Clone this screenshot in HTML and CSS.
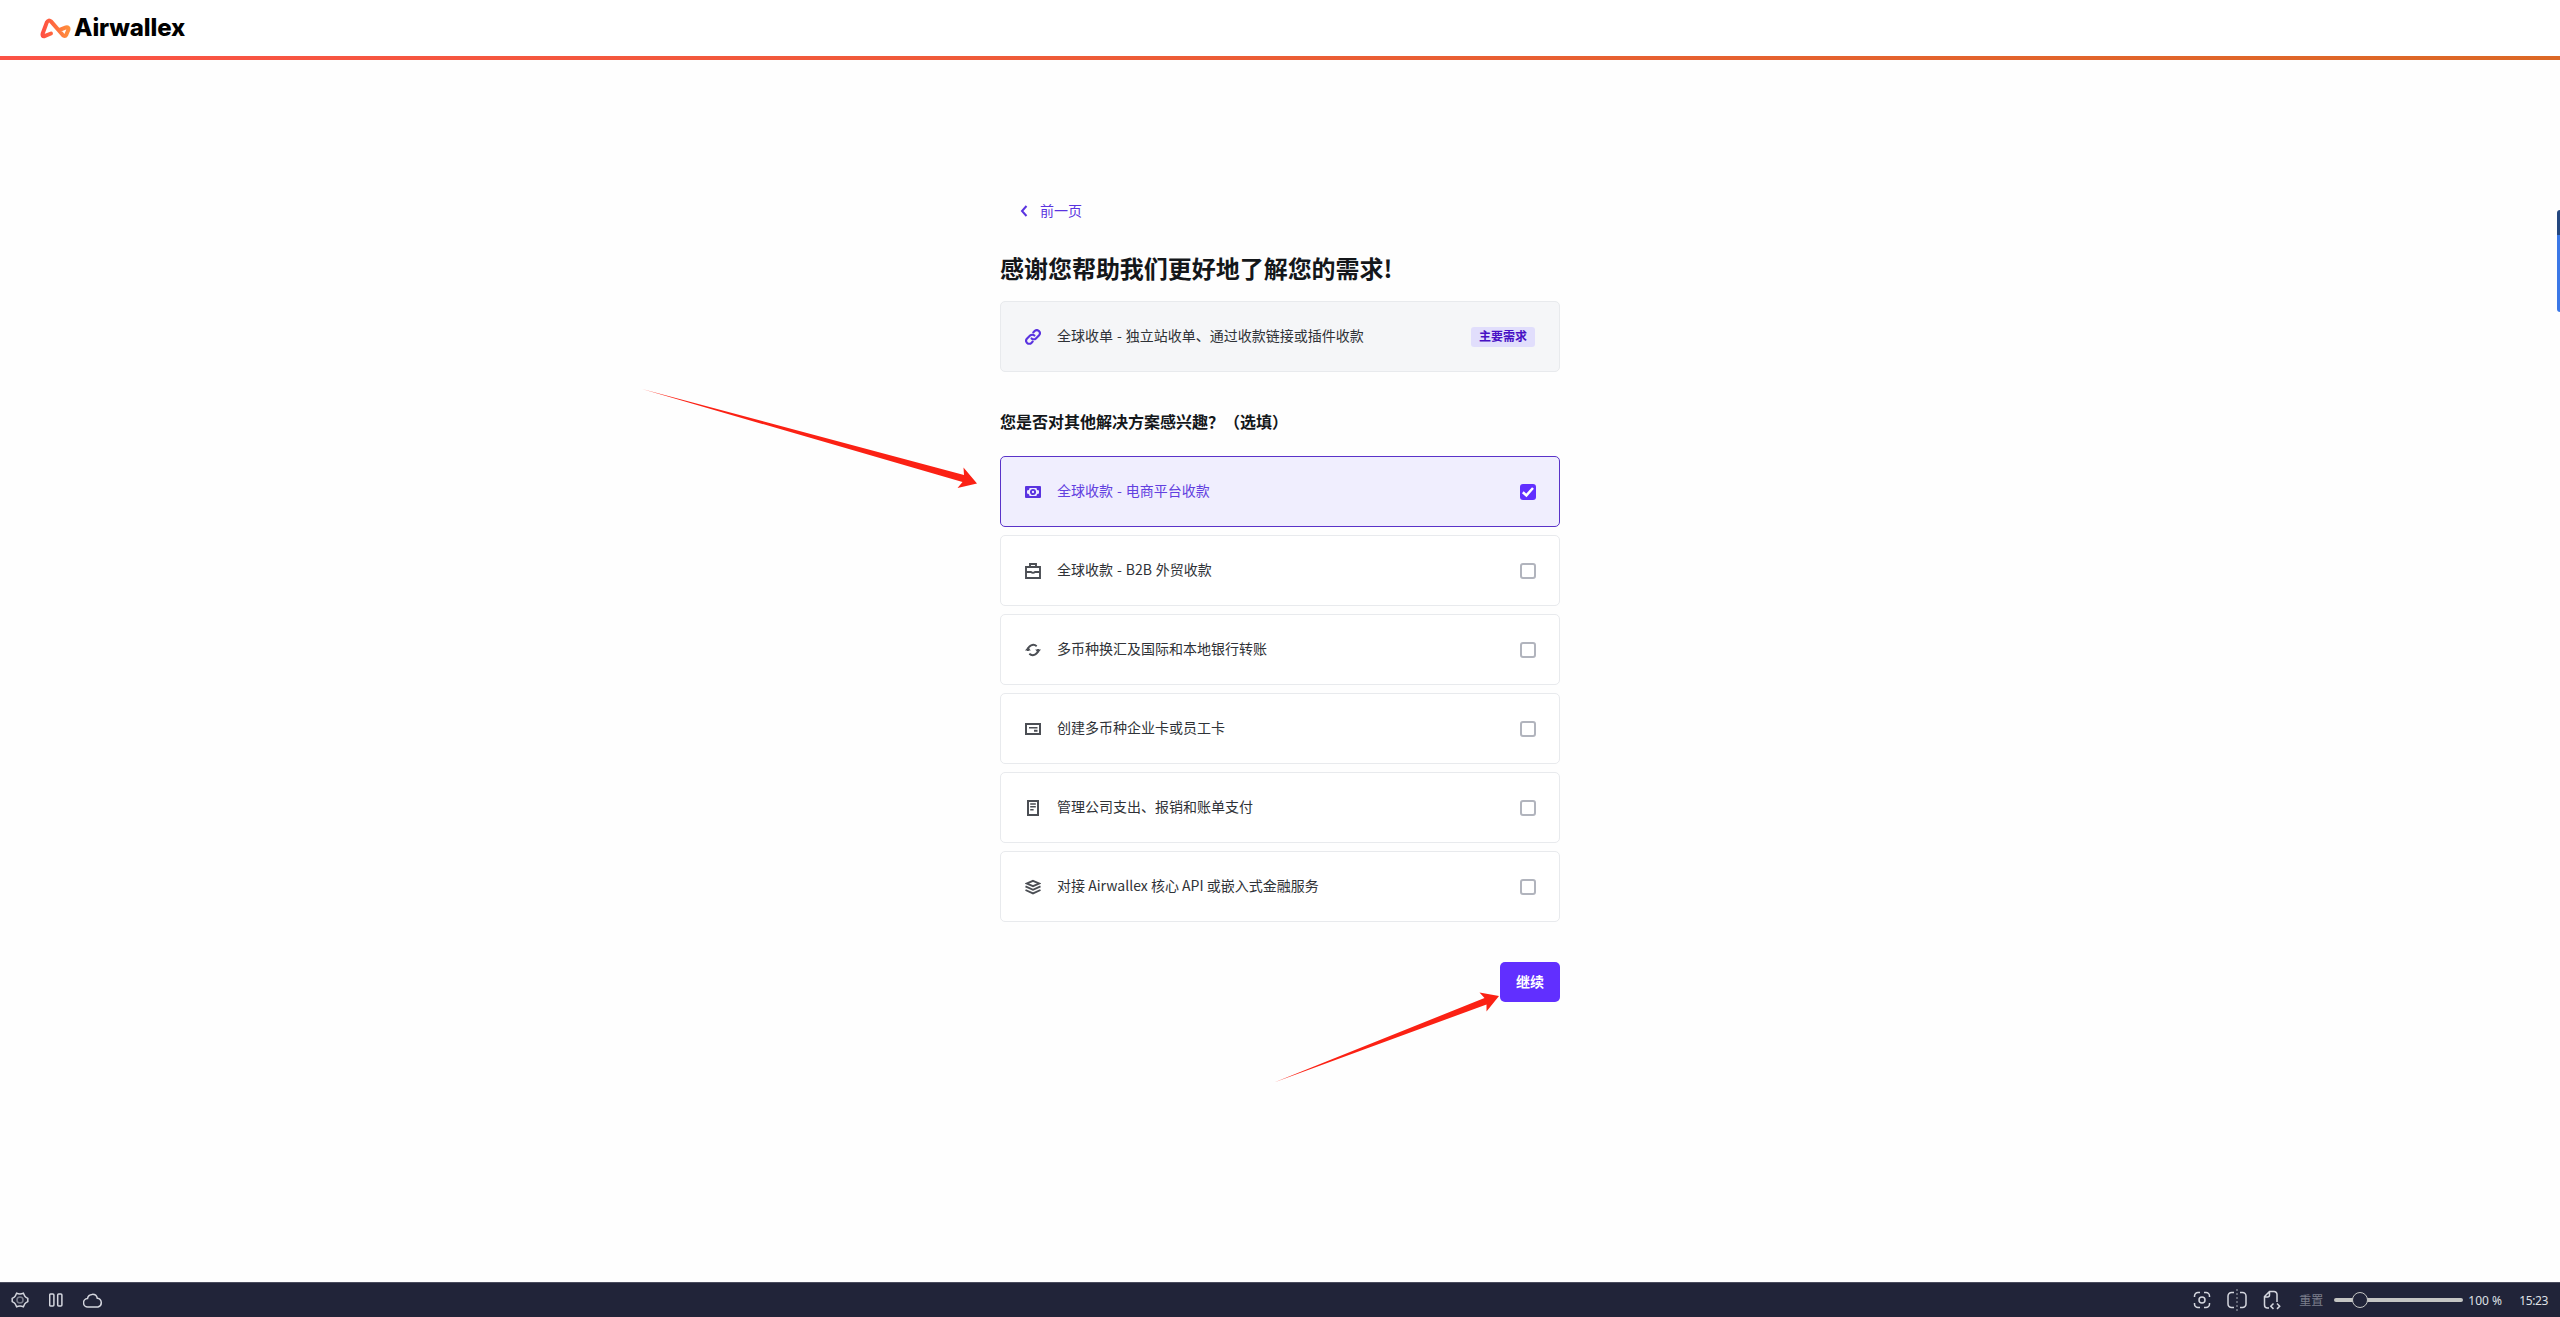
FILE: index.html
```html
<!DOCTYPE html>
<html lang="zh-CN">
<head>
  <meta charset="UTF-8">
  <meta name="viewport" content="width=device-width, initial-scale=1.0">
  <title>Airwallex</title>
  <link rel="stylesheet" href="styles.css">
</head>
<body>

  <header class="header">
    <svg class="logo-mark" width="31" height="21" viewBox="0 0 31 21">
      <defs>
        <linearGradient id="brand" x1="0" y1="0" x2="1" y2="0">
          <stop offset="0" stop-color="#ff4f42"/>
          <stop offset="1" stop-color="#ff8e3c"/>
        </linearGradient>
      </defs>
      <path d="M11 15.5L4.5 18.2Q1.8 18.700 2.600 15.800L6.800 4.400Q8.400 1.200 11.200 3.600L22.600 16.800Q24.800 19.200 26.400 16.600L28.500 11.600Q29 8.900 26 9.400L19 12.200" fill="none" stroke="url(#brand)" stroke-width="4" stroke-linecap="round" stroke-linejoin="round"/>
    </svg>
    <span class="logo-text">Airwallex</span>
  </header>
  <div class="brand-line"></div>

  <main class="content">
    <a class="back">
      <svg width="8" height="12" viewBox="0 0 8 12"><path d="M6.500 1L2 6l4.500 5" fill="none" stroke="currentColor" stroke-width="2"/></svg>
      <span>前一页</span>
    </a>

    <h1>感谢您帮助我们更好地了解您的需求!</h1>

    <div class="card primary">
      <svg class="icon" viewBox="0 0 16 16"><g fill="none" stroke="currentColor" stroke-width="2.1" stroke-linecap="round"><path d="M6.600 9.400a3 3 0 0 0 4.300 0l3-3a3 3 0 0 0-4.300-4.300L8.300 3.400"/><path d="M9.400 6.600a3 3 0 0 0-4.300 0l-3 3a3 3 0 0 0 4.300 4.300l1.300-1.300"/></g></svg>
      <span class="label dash">全球收单 - 独立站收单、通过收款链接或插件收款</span>
      <span class="badge">主要需求</span>
    </div>

    <h2>您是否对其他解决方案感兴趣？（选填）</h2>

    <div class="options">
      <div class="card selected">
        <svg class="icon" viewBox="0 0 16 16"><path fill="currentColor" fill-rule="evenodd" d="M1 2h14a1 1 0 0 1 1 1v10a1 1 0 0 1-1 1H1a1 1 0 0 1-1-1V3a1 1 0 0 1 1-1zm3.500 2A2.500 2.500 0 0 1 2 6.500v3A2.500 2.500 0 0 1 4.500 12h7A2.500 2.500 0 0 1 14 9.500v-3A2.500 2.500 0 0 1 11.500 4z"/><circle cx="8" cy="8" r="2.1" fill="none" stroke="currentColor" stroke-width="1.9"/></svg>
        <span class="label dash">全球收款 - 电商平台收款</span>
        <span class="checkbox checked"><svg width="16" height="16" viewBox="0 0 16 16"><path d="M2.800 8.200l3.600 3.200L13 4" fill="none" stroke="#fff" stroke-width="2.500"/></svg></span>
      </div>
      <div class="card">
        <svg class="icon" viewBox="0 0 16 16"><g fill="none" stroke="currentColor" stroke-width="1.9"><path d="M1 4h14v11H1zM5 4V1h6v3"/><path d="M1 9h5q2 1.600 4 0h5"/></g></svg>
        <span class="label dash">全球收款 - B2B 外贸收款</span>
        <span class="checkbox"></span>
      </div>
      <div class="card">
        <svg class="icon" viewBox="0 0 16 16"><g fill="none" stroke="currentColor" stroke-width="1.900"><path d="M2.900 9V8A5.300 5.300 0 0 1 11.700 4.200"/><path d="M13.100 7v1A5.300 5.300 0 0 1 4.300 11.800"/></g><path d="M0 8.600L2.900 5l2.900 3.600zM16 7.400L13.100 11l-2.900-3.600z" fill="currentColor"/></svg>
        <span class="label">多币种换汇及国际和本地银行转账</span>
        <span class="checkbox"></span>
      </div>
      <div class="card">
        <svg class="icon" viewBox="0 0 16 16"><path d="M1 3h14v10H1z" fill="none" stroke="currentColor" stroke-width="2"/><path d="M4 6h8.500v1.600H4zM9 8.800h3.500v1.900H9z" fill="currentColor"/></svg>
        <span class="label">创建多币种企业卡或员工卡</span>
        <span class="checkbox"></span>
      </div>
      <div class="card">
        <svg class="icon" viewBox="0 0 16 16"><path d="M3 1h10v14H3z" fill="none" stroke="currentColor" stroke-width="2"/><path d="M5.200 3.200h5.600v1.500H5.200zM5.200 6.100h5.600v1.500H5.200zM5.200 9h3.400v1.500H5.200z" fill="currentColor"/></svg>
        <span class="label">管理公司支出、报销和账单支付</span>
        <span class="checkbox"></span>
      </div>
      <div class="card">
        <svg class="icon" viewBox="0 0 16 16"><g fill="none" stroke="currentColor" stroke-width="1.900"><path d="M8 1.800l6 2.700-6 2.700-6-2.700z"/><path d="M.500 7.400L8 10.800l7.500-3.400M.500 11L8 14.400l7.500-3.400"/></g></svg>
        <span class="label">对接 Airwallex 核心 API 或嵌入式金融服务</span>
        <span class="checkbox"></span>
      </div>
    </div>

    <button class="button">继续</button>
  </main>

  <!-- Browser status bar -->
  <footer class="statusbar">
    <div class="status-left">
      <svg width="18" height="16" viewBox="0 0 18 16"><path d="M5.600 1.200Q9 2.600 12.400 1.200L13.800 4.200Q14.400 5.200 16.800 6.400V9.600Q14.400 10.800 13.800 11.800L12.400 14.800Q9 13.400 5.600 14.800L4.200 11.800Q3.600 10.800 1.200 9.600V6.400Q3.600 5.200 4.200 4.200z"/><circle class="dim" cx="9" cy="8" r="3"/></svg>
      <svg width="14" height="14" viewBox="0 0 14 14"><rect x=".700" y="1" width="4.200" height="12" rx="1"/><rect x="8.700" y="1" width="4.200" height="12" rx="1"/></svg>
      <svg width="20" height="15" viewBox="0 0 20 15"><path d="M5 14a4.200 4.200 0 0 1-.500-8.400A5 5 0 0 1 14.300 5.200a4.500 4.500 0 0 1 .700 8.800z"/></svg>
    </div>
    <div class="status-right">
      <svg width="18" height="18" viewBox="0 0 18 18"><path d="M1.500 6V5a3.500 3.500 0 0 1 3.500-3.500h2M11 1.500h2A3.500 3.500 0 0 1 16.500 5v1M16.500 12v1a3.500 3.500 0 0 1-3.500 3.500h-2M7 16.500H5A3.500 3.500 0 0 1 1.500 13v-1"/><circle cx="9" cy="9" r="3"/></svg>
      <svg width="20" height="22" viewBox="0 0 20 22"><path d="M7 3.500H4.500a3.500 3.500 0 0 0-3.500 3.500v8a3.500 3.500 0 0 0 3.500 3.500H7M13 3.500h2.500A3.500 3.500 0 0 1 19 7v8a3.500 3.500 0 0 1-3.500 3.500H13"/><path class="dim" d="M10 0v22" stroke-dasharray="2 2"/></svg>
      <svg width="18" height="20" viewBox="0 0 18 20"><path d="M6 18H4.500a3 3 0 0 1-3-3V6.500L6.500 1.500H11a3 3 0 0 1 3 3V12M1.500 7H4.500a2 2 0 0 0 2-2V2M10.500 13.500L7.800 16.200l2.700 2.700M14 13.500l2.700 2.700-2.700 2.700"/></svg>
      <span class="reset">重置</span>
      <div class="slider"><div class="knob"></div></div>
      <span class="zoom">100 %</span>
      <span class="clock">15:23</span>
    </div>
  </footer>

  <div class="side-tab"></div>

  <!-- Red pointer arrows -->
  <svg class="arrow arrow-option" width="340" height="106" viewBox="0 0 340 106"><path d="M0 0L322 86l-.500-7.500L335 94.500l-19.500 4.500 5-6z"/></svg>
  <svg class="arrow arrow-button" width="230" height="92" viewBox="0 0 230 92"><path d="M0 90.500L210.500 6 205.500.500 225 4l-12.500 15.500V12.500z"/></svg>

</body>
</html>
```

FILE: styles.css
```css
* { box-sizing: border-box; }
body { margin: 0; height: 1317px; overflow: hidden; display: flex; flex-direction: column; background: #fefefe; color: #14171a; font-family: "Noto Sans CJK SC", sans-serif; font-size: 14px; }
.header { height: 56px; padding: 0 40px; display: flex; align-items: center; background: #fff; }
.logo-mark { flex: none; }
.logo-text { margin-left: 3px; font-family: Inter, "Noto Sans", sans-serif; font-size: 24px; font-weight: 800; letter-spacing: -0.1px; line-height: 1; color: #000; }
.brand-line { height: 4px; background: linear-gradient(90deg, #fb5245, #dc6825); }

.content { width: 560px; margin: 0 auto; flex: 1; display: flex; flex-direction: column; }
.back { display: flex; align-items: center; gap: 12px; height: 40px; margin-top: 131px; padding-left: 20px; color: #5a33e0; }
.back span { margin-top: -2px; }
h1 { margin: 19px 0 0; height: 37px; font-size: 24px; line-height: 36px; font-weight: 700; letter-spacing: -0.03px; }
h2 { margin: 37px 0 23px; height: 24px; font-size: 16px; line-height: 24px; font-weight: 700; }
.card { display: flex; align-items: center; height: 71px; padding: 0 23px 0 24px; background: #fff; border: 1px solid #e8eaed; border-radius: 5px; color: #2f3237; }
.icon { width: 16px; height: 16px; margin-right: 16px; color: #4b4e54; flex: none; }
.label { flex: 1; line-height: 21px; margin-top: -2px; }
.dash { word-spacing: 0.8px; }
.primary { margin-top: 14px; background: #f5f6f8; }
.primary .icon, .selected .icon { color: #5a33e0; }
.badge { height: 20px; margin-right: 1px; padding: 0 8px; background: #e1defc; border-radius: 3px; color: #4810c4; font-size: 12px; line-height: 18px; font-weight: 700; }
.options { display: flex; flex-direction: column; gap: 8px; }
.selected { background: #f0eefe; border-color: #5a33c8; color: #6240e0; }
.checkbox { width: 16px; height: 16px; border: 2px solid #b1b4bd; border-radius: 3px; background: #fff; }
.checked { display: flex; border: none; background: #612fff; }
.button { align-self: flex-end; width: 60px; height: 40px; margin-top: 40px; padding: 0 0 2px; border: none; border-radius: 5px; background: #612fff; color: #fff; font: 700 14px "Noto Sans CJK SC", sans-serif; }

.statusbar { height: 35px; padding: 0 12px 0 11px; display: flex; justify-content: space-between; align-items: center; background: #212439; border-top: 1px solid #4a4c5e; color: #dfe0e6; font-family: "Noto Sans", "Noto Sans CJK SC", sans-serif; font-size: 12px; }
.statusbar svg { fill: none; stroke: #d4d6de; stroke-width: 1.5; }
.statusbar .dim { stroke: #7a7d8b; }
.status-left, .status-right { display: flex; align-items: center; }
.status-left { gap: 20px; }
.status-right svg { margin-right: 16px; }
.reset { margin-left: 2px; color: #7b7e8b; }
.slider { width: 129px; height: 4px; margin: 0 5px 0 11px; border-radius: 2px; background: #c4c5c3; display: flex; align-items: center; }
.knob { width: 16px; height: 16px; margin-left: 18px; border: 1px solid #c4c5c3; border-radius: 50%; background: #212439; }
.zoom { width: 51px; }
.clock { letter-spacing: -0.4px; }

.side-tab { position: absolute; right: 0; top: 210px; width: 3px; height: 102px; border-radius: 3px 0 0 3px; background: linear-gradient(#24477f 25%, #3b78e7 25%); }
.arrow { position: absolute; fill: #fb2114; }
.arrow-option { left: 642px; top: 389px; }
.arrow-button { left: 1274px; top: 992px; }
```
